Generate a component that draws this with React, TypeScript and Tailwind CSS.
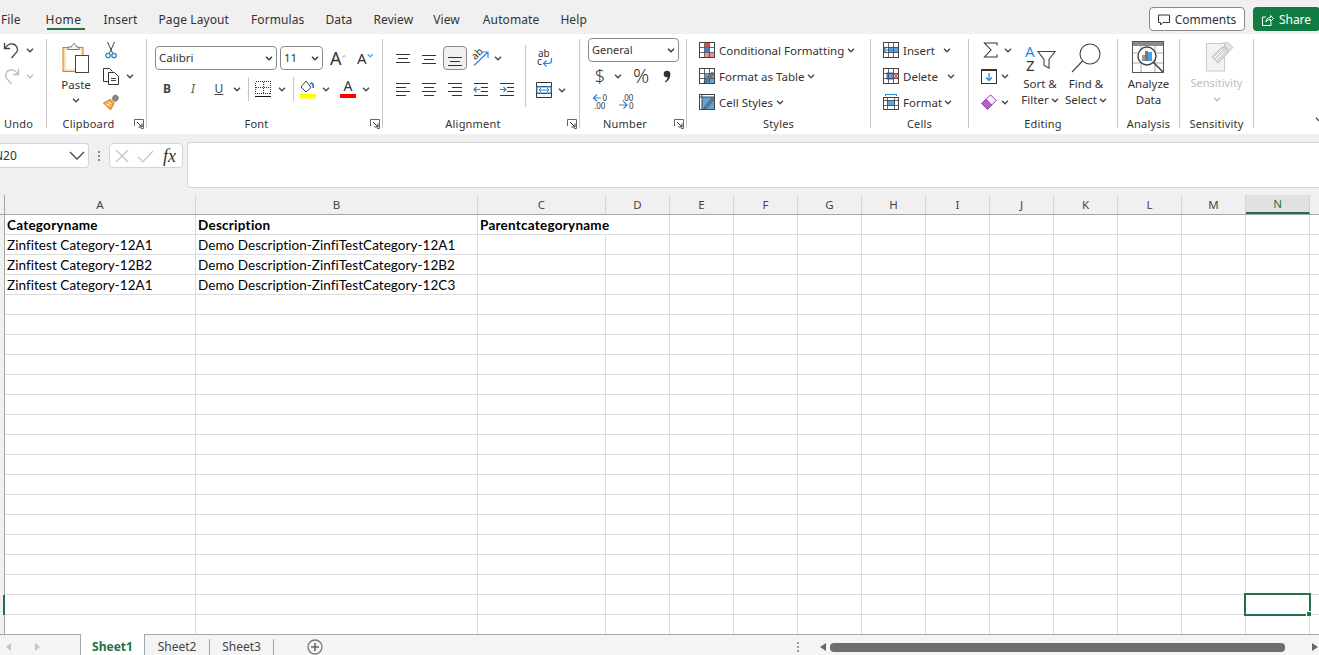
import React from 'react';

const UI = "font-['Noto_Sans',sans-serif]";

const Chev = ({ c = '#444', w = 8 }: { c?: string; w?: number }) => (
  <svg width={w} height="5" viewBox="0 0 8 5" className="shrink-0"><path d="M1 .8l3 3 3-3" fill="none" stroke={c} strokeWidth="1.300" /></svg>
);

const Launcher = () => (
  <svg width="10" height="10" viewBox="0 0 10 10"><path d="M.5 7V.5h9V9.500H7" fill="none" stroke="#666" /><path d="M3 3l5 5M8 4.500V8H4.500" fill="none" stroke="#333" /></svg>
);

const Group = ({ w, label, launcher, children, pr }: { w: string; label: string; launcher?: boolean; children: React.ReactNode; pr?: string }) => (
  <div className={`${w} shrink-0 h-[89px] border-r border-[#c8c8c8] flex flex-col`}>
    <div className="h-[79px] shrink-0 flex">{children}</div>
    <div className={`flex h-[12px] shrink-0 items-center ${pr ?? ''}`}>
      <div className="flex-1 text-center text-[11px] leading-[12px] text-[#333] tracking-[0.2px] whitespace-nowrap">{label}</div>
      {launcher && <div className="w-[16px] shrink-0 flex justify-start pl-[4px]"><Launcher /></div>}
    </div>
  </div>
);

const Slot = ({ w, children, h = 'h-[22px]', ml = '' }: { w: string; children?: React.ReactNode; h?: string; ml?: string }) => (
  <div className={`${w} ${h} ${ml} shrink-0 flex items-center justify-center`}>{children}</div>
);

const Lines = ({ rows }: { rows: [number, number, number][] }) => (
  <svg width="16" height="14" viewBox="0 0 16 14">
    {rows.map(([x1, x2, y], i) => <path key={i} d={`M${x1} ${y + 0.5}H${x2}`} stroke="#333" strokeWidth="1" />)}
  </svg>
);

const Undo = ({ c }: { c: string }) => (
  <svg width="17" height="18" viewBox="0 0 17 18"><path d="M1.500 2v5.500H7" fill="none" stroke={c} strokeWidth="1.300" /><path d="M1.800 7.300C4 4 7 2.200 10 3c4 1 5.400 5 3.800 8L8.500 17" fill="none" stroke={c} strokeWidth="1.300" /></svg>
);
const Redo = ({ c }: { c: string }) => (
  <svg width="17" height="18" viewBox="0 0 17 18"><path d="M15.500 2v5.500H10" fill="none" stroke={c} strokeWidth="1.300" /><path d="M15.200 7.300C13 4 10 2.200 7 3 3 4 1.600 8 3.200 11L8.500 17" fill="none" stroke={c} strokeWidth="1.300" /></svg>
);

const PasteIcon = () => (
  <svg width="28" height="31" viewBox="0 0 28 31">
    <rect x="1" y="4.500" width="20" height="24" fill="#fbe0b4" stroke="#d67f1d" />
    <rect x="4" y="7" width="15" height="19" fill="#fff" />
    <path d="M6 6.500V4h3.500C10 1.500 12 .5 12 .5s2 1 2.500 3.500H17v2.500z" fill="#f4f4f4" stroke="#777" />
    <rect x="13.500" y="12.500" width="13" height="17" fill="#fff" stroke="#444" />
  </svg>
);
const Scissors = () => (
  <svg width="12" height="17" viewBox="0 0 12 17">
    <path d="M2.500 0l5 11M9.500 0l-5 11" stroke="#444" fill="none" />
    <circle cx="3" cy="13.500" r="2.200" fill="none" stroke="#1e88d4" strokeWidth="1.300" />
    <circle cx="9" cy="13.500" r="2.200" fill="none" stroke="#1e88d4" strokeWidth="1.300" />
  </svg>
);
const CopyIcon = () => (
  <svg width="16" height="17" viewBox="0 0 16 17">
    <path d="M5 13.500H.5V.5h6l3 3" fill="#fff" stroke="#333" />
    <path d="M5.500 4.500h6l4 4v8h-10z" fill="#fff" stroke="#333" />
    <path d="M8 10.500h5M8 12.500h5" stroke="#444" />
  </svg>
);
const Painter = () => (
  <svg width="17" height="17" viewBox="0 0 17 17">
    <path d="M11 1.500l3-1 2.500 2.500-1 3-3 1.500L10 5z" fill="#888" stroke="#555" strokeWidth=".7" />
    <path d="M.5 9L8 5l4 4-4 7.500z" fill="#f4a63e" stroke="#d9751a" />
    <path d="M3 10l5 2M5 8l4 2" stroke="#fff" />
  </svg>
);

const SmallCaret = ({ up }: { up?: boolean }) => (
  <svg width="7" height="5" viewBox="0 0 7 5" className="mb-[10px]"><path d={up ? 'M.7 4l2.800-3 2.800 3' : 'M.7 1l2.800 3 2.800-3'} fill="none" stroke="#38a0e0" strokeWidth="1.200" /></svg>
);

const SelectBox = ({ w, text, cls = '' }: { w: string; text: string; cls?: string }) => (
  <div className={`${w} h-[24px] bg-white border border-[#8a8a8a] rounded-[4px] flex items-center justify-between pl-[3px] pr-[3px] text-[11.500px] text-[#333] ${cls}`}>
    <span>{text}</span><Chev c="#333" />
  </div>
);

const BordersIcon = () => (
  <svg width="16" height="17" viewBox="0 0 16 17" shapeRendering="crispEdges">
    <path d="M.5.500h15v12h-15zM.5 6.500h15M8 .500v12" fill="none" stroke="#333" strokeWidth="1" strokeDasharray="1 1" />
    <path d="M0 15.500h16" stroke="#111" strokeWidth="1.400" />
  </svg>
);
const FillIcon = () => (
  <svg width="16" height="19" viewBox="0 0 16 19">
    <path d="M6 1L1 7l5 5 5-4.500z" fill="#fff" stroke="#444" />
    <path d="M10 3c2-1.500 4 0 4 3v2h-1.600V5.500c0-1-1-1.500-2-1z" fill="#1e6fb8" />
    <rect x="0" y="14" width="16" height="4.500" fill="#ffff00" />
  </svg>
);

const Orientation = () => (
  <div className="relative w-[18px] h-[18px]">
    <svg width="18" height="18" viewBox="0 0 18 18" className="absolute inset-0"><path d="M2 16.500L16 3M10 3h6v6" fill="none" stroke="#2b88d8" strokeWidth="1.200" /></svg>
    <span className="absolute -left-[1px] -top-[1px] text-[10px] leading-[11px] text-[#333] -rotate-45 origin-center">ab</span>
  </div>
);
const WrapIcon = () => (
  <svg width="16" height="17" viewBox="0 0 16 17" className="overflow-visible">
    <text x="1" y="7" fontSize="10" fill="#333" fontFamily="Noto Sans">ab</text>
    <text x="0" y="15" fontSize="10" fill="#333" fontFamily="Noto Sans">c</text>
    <path d="M14.500 8v2.500c0 2-1 3-3 3H7M9.500 10.500l-3 3 3 3" fill="none" stroke="#2b88d8" strokeWidth="1.200" />
  </svg>
);
const MergeIcon = () => (
  <svg width="16" height="16" viewBox="0 0 16 16">
    <path d="M.5.500h15v15H.5zM.5 4.500h15M.5 11.500h15" fill="none" stroke="#333" />
    <rect x="1" y="5" width="14" height="6" fill="#fff" stroke="#2b88d8" />
    <path d="M3 8h10M5 6l-2 2 2 2M11 6l2 2-2 2" fill="none" stroke="#2b88d8" />
  </svg>
);
const CommaIcon = () => (
  <svg width="8" height="13" viewBox="0 0 8 13" className="shrink-0"><circle cx="4" cy="4" r="3.300" fill="#333" /><path d="M7.200 4c.3 4-1.700 7-5 8.500l-.4-1C4 10 5 8 4.500 6z" fill="#333" /></svg>
);
const IncDec = () => (
  <svg width="17" height="16" viewBox="0 0 17 16" className="overflow-visible">
    <path d="M9 5H1.500M5 1.500L1.500 5 5 8.500" fill="none" stroke="#2b88d8" strokeWidth="1.200" />
    <text x="10.500" y="7.500" fontSize="8" fill="#333" fontFamily="Noto Sans">0</text>
    <text x="2" y="15.500" fontSize="8" fill="#333" fontFamily="Noto Sans">.00</text>
  </svg>
);
const DecDec = () => (
  <svg width="17" height="16" viewBox="0 0 17 16" className="overflow-visible">
    <text x="4" y="7.500" fontSize="8" fill="#333" fontFamily="Noto Sans">.00</text>
    <path d="M1 12h8M5.500 8.500L9 12l-3.500 3.500" fill="none" stroke="#2b88d8" strokeWidth="1.200" />
    <text x="11" y="15.500" fontSize="8" fill="#333" fontFamily="Noto Sans">0</text>
  </svg>
);

const Grid = ({ children }: { children?: React.ReactNode }) => (
  <svg width="16" height="16" viewBox="0 0 16 16" className="shrink-0">
    <rect x=".5" y=".5" width="15" height="15" fill="#fff" stroke="#444" />
    {children}
    <path d="M.5 5.500h15M.5 10.500h15M5.500.500v15M10.500.500v15" fill="none" stroke="#444" strokeWidth=".8" />
    <rect x=".5" y=".5" width="15" height="15" fill="none" stroke="#444" />
  </svg>
);
const CondIcon = () => <Grid><rect x="6" y="1" width="4" height="4" fill="#e8414a" /><rect x="6" y="6" width="4" height="4" fill="#2b88d8" /><rect x="6" y="11" width="9" height="4" fill="#f48d92" /></Grid>;
const Brush = () => <path d="M5 15l1-3 7-8 2 1.500-6.500 8z" fill="#777" stroke="#444" strokeWidth=".6" />;
const TableIcon = () => <svg width="16" height="16" viewBox="0 0 16 16" className="shrink-0"><rect x=".5" y=".5" width="15" height="15" fill="#fff" stroke="#444" /><rect x="6" y="6" width="9" height="9" fill="#5aa5e3" /><path d="M.5 5.500h15M.5 10.500h15M5.500.500v15M10.500.500v15" fill="none" stroke="#444" strokeWidth=".8" /><Brush /></svg>;
const CellStyleIcon = () => (
  <svg width="16" height="16" viewBox="0 0 16 16" className="shrink-0"><rect x=".5" y=".5" width="15" height="15" fill="#fff" stroke="#444" /><rect x="3" y="3" width="12" height="12" fill="#5aa5e3" /><path d="M.5 3h15M3 .5V15.500" stroke="#444" /><Brush /></svg>
);
const InsertIcon = () => <Grid><rect x="6" y="5" width="9" height="6" fill="#5aa5e3" /><path d="M.5 8H9M3.500 5L.5 8l3 3" fill="none" stroke="#1e88d4" strokeWidth="1.200" /></Grid>;
const DeleteIcon = () => <Grid><rect x="4" y="5" width="6" height="6" fill="#5aa5e3" stroke="#1e6fb8" /><path d="M11 5.500l4 5M15 5.500l-4 5" stroke="#e8414a" strokeWidth="1.300" /></Grid>;
const FormatIcon = () => (
  <svg width="16" height="16" viewBox="0 0 16 16" className="shrink-0">
    <path d="M2.500.500h11M2.500 0v2M13.500 0v2" stroke="#1e88d4" fill="none" />
    <rect x=".5" y="3.500" width="15" height="12" fill="#fff" stroke="#444" />
    <rect x="4" y="6" width="8" height="6" fill="#5aa5e3" />
    <path d="M.5 6.500h15M.5 11.500h15M4.500 3.500v12M11.500 3.500v12" stroke="#444" strokeWidth=".8" />
  </svg>
);
const SumIcon = () => (
  <svg width="15" height="16" viewBox="0 0 15 16"><path d="M14 3.500V1H1.500l6.500 7-6.500 7H14v-2.500" fill="none" stroke="#333" strokeWidth="1.100" /></svg>
);
const FillDown = () => (
  <svg width="16" height="15" viewBox="0 0 16 15"><rect x=".5" y=".5" width="15" height="14" fill="#fff" stroke="#333" /><path d="M.5 1.500h15" stroke="#333" /><path d="M8 4v7M5 8.500L8 11.500l3-3" fill="none" stroke="#2b88d8" strokeWidth="1.300" /></svg>
);
const Eraser = () => (
  <svg width="16" height="16" viewBox="0 0 16 16"><path d="M.8 9.500L9.500.8l5.700 5.700-8.700 8.700z" fill="#f6eef9" stroke="#8d3fa8" /><path d="M.8 9.500L5 5.300l5.700 5.700-4.200 4.200z" fill="#b264c9" stroke="#8d3fa8" /></svg>
);
const SortIcon = () => (
  <svg width="31" height="27" viewBox="0 0 31 27" className="overflow-visible">
    <text x="0" y="13" fontSize="15" fill="#2b88d8" fontFamily="Noto Sans">A</text>
    <text x="1" y="27" fontSize="15" fill="#333" fontFamily="Noto Sans">Z</text>
    <path d="M13 7.500h17l-6 8V24l-5-2.500v-6z" fill="#fff" stroke="#444" strokeWidth="1.100" />
  </svg>
);
const FindIcon = () => (
  <svg width="30" height="30" viewBox="0 0 30 30"><circle cx="19" cy="11" r="10" fill="#fff" stroke="#444" strokeWidth="1.100" /><path d="M11.500 18L1 29" stroke="#444" strokeWidth="1.100" /></svg>
);
const AnalyzeIcon = () => (
  <svg width="33" height="33" viewBox="0 0 33 33">
    <rect x=".5" y=".5" width="31" height="31" fill="#fff" stroke="#555" />
    <rect x="1" y="1" width="30" height="4" fill="#8a8a8a" />
    <path d="M1 12h30M1 22h30M9 5v26M23 5v26" stroke="#aaa" />
    <circle cx="15" cy="15" r="9" fill="#fff" stroke="#444" strokeWidth="1.400" />
    <rect x="10" y="14" width="3" height="6" fill="#999" /><rect x="13" y="10" width="3" height="10" fill="#777" /><rect x="16" y="11" width="4" height="9" fill="#4a9fe0" />
    <path d="M21 21l10 10" stroke="#444" strokeWidth="1.600" />
  </svg>
);
const SensIcon = () => (
  <svg width="28" height="30" viewBox="0 0 28 30">
    <path d="M.5 1.500h16v-1l2 1 .1 3.500 3 5-3 3v16H.5z" fill="#f2f2f2" stroke="#c9c9c9" />
    <path d="M6 15l10-10 7 2-1 4-10 10z" fill="#d8d8d8" stroke="#bdbdbd" />
    <path d="M18 1l4-.5 5 5-4 4z" fill="#e4e4e4" stroke="#c5c5c5" />
    <path d="M8 16l8-8M10 18l8-8" stroke="#fff" />
  </svg>
);

const tabs: [string, string][] = [
  ['Home', 'ml-[26px] w-[38px] -indent-[1px] tracking-[0.4px]'], ['Insert', 'ml-[19px]'], ['Page Layout', 'ml-[21px]'], ['Formulas', 'ml-[22px]'],
  ['Data', 'ml-[21px]'], ['Review', 'ml-[21px]'], ['View', 'ml-[20px]'], ['Automate', 'ml-[23px]'], ['Help', 'ml-[21px]'],
];

const cols = 'grid grid-cols-[5px_191px_282px_128px_repeat(11,64px)_1fr]';
const letters = ['A', 'B', 'C', 'D', 'E', 'F', 'G', 'H', 'I', 'J', 'K', 'L', 'M', 'N'];
const data: string[][] = [
  ['Categoryname', 'Description', 'Parentcategoryname'],
  ['Zinfitest Category-12A1', 'Demo Description-ZinfiTestCategory-12A1', ''],
  ['Zinfitest Category-12B2', 'Demo Description-ZinfiTestCategory-12B2', ''],
  ['Zinfitest Category-12A1', 'Demo Description-ZinfiTestCategory-12C3', ''],
];
const rows = Array.from({ length: 21 }, (_, i) => i);

export default function App() {
  return (
    <div className={`w-[1319px] h-[655px] overflow-hidden bg-[#f0f0f0] flex flex-col ${UI} text-[#333]`}>
      {/* Tabs */}
      <div className="h-[34px] shrink-0 flex items-start">
        <div className="flex items-start pt-[11px] pl-[1px] text-[12px] leading-[18px] tracking-[0.1px] text-[#333]">
          <span>File</span>
          {tabs.map(([t, m]) => (
            <span key={t} className={`${m} relative whitespace-nowrap`}>
              {t}
              {t === 'Home' && <span className="absolute left-0 right-0 top-[17px] h-[2px] bg-[#217346]" />}
            </span>
          ))}
        </div>
        <div className="ml-auto flex pt-[7px] gap-[8px] -mr-[1px]">
          <div className="w-[96px] h-[24px] bg-white border border-[#8a8a8a] rounded-[4px] flex items-center justify-center gap-[5px] text-[12px] leading-[24px] pt-[2px]">
            <svg width="12" height="12" viewBox="0 0 12 12"><path d="M.5 1h11v7.500H5L2.500 11V8.500H.5z" fill="none" stroke="#333" /></svg>
            Comments
          </div>
          <div className="w-[67px] h-[24px] bg-[#107c41] rounded-[4px] flex items-center justify-center gap-[5px] text-[12px] leading-[24px] pt-[2px] text-white">
            <svg width="12" height="12" viewBox="0 0 12 12"><path d="M4 3H.5v8.500h8.500V8M4 8c0-3 2-4.500 4.500-4.500V1.500l3 3-3 3V5.500C6.500 5.500 5 6 4 8z" fill="none" stroke="#fff" /></svg>
            Share
          </div>
        </div>
      </div>

      {/* Ribbon */}
      <div className="h-[100px] shrink-0 bg-white pt-[5px] flex text-[11.500px] leading-[14px]">
        <Group w="w-[47px]" label="Undo" pr="pr-[11px] pl-[2px]">
          <div className="flex flex-col gap-[4px] pl-[3px]">
            <div className="h-[22px] flex items-center gap-[6px]"><Undo c="#444" /><Chev /></div>
            <div className="h-[22px] flex items-center gap-[6px]"><Redo c="#bbb" /><Chev c="#bbb" /></div>
          </div>
        </Group>

        <Group w="w-[100px]" label="Clipboard" launcher>
          <div className="w-[47px] pl-[11px] flex flex-col items-center pt-[4px]">
            <PasteIcon />
            <span className="mt-[4px] text-[11.500px] leading-[14px]">Paste</span>
            <div className="mt-[6px]"><Chev /></div>
          </div>
          <div className="flex flex-col gap-[4px] pl-[9px]">
            <Slot w="w-[16px]"><Scissors /></Slot>
            <div className="h-[22px] flex items-center gap-[7px]"><CopyIcon /><Chev /></div>
            <Slot w="w-[16px]"><Painter /></Slot>
          </div>
        </Group>

        <Group w="w-[236px]" label="Font" launcher>
          <div className="flex flex-col pl-[8px] pt-[7px]">
            <div className="flex items-center h-[24px]">
              <SelectBox w="w-[122px]" text="Calibri" />
              <SelectBox w="w-[43px]" text="11" cls="ml-[3px]" />
              <div className="ml-[7px] w-[16px] flex items-end"><span className="text-[18px] leading-[22px] text-[#333]">A</span><SmallCaret up /></div>
              <div className="ml-[11px] w-[16px] flex items-end"><span className="text-[15px] leading-[20px] text-[#333]">A</span><SmallCaret /></div>
            </div>
            <div className="flex items-center mt-[7px] h-[24px]">
              <Slot w="w-[24px]" h="h-[24px]"><span className="font-bold text-[12px] text-[#444]">B</span></Slot>
              <Slot w="w-[24px]" h="h-[24px]" ml="ml-[2px]"><span className="italic text-[12px] text-[#555]">I</span></Slot>
              <Slot w="w-[24px]" h="h-[24px]" ml="ml-[2px]"><span className="underline text-[12px] text-[#444]">U</span></Slot>
              <Slot w="w-[8px]" h="h-[24px]" ml="ml-[2px]"><Chev /></Slot>
              <div className="w-px h-[24px] bg-[#c8c8c8] ml-[7px]" />
              <Slot w="w-[16px]" h="h-[24px]" ml="ml-[6px]"><BordersIcon /></Slot>
              <Slot w="w-[8px]" h="h-[24px]" ml="ml-[7px]"><Chev /></Slot>
              <div className="w-px h-[24px] bg-[#c8c8c8] ml-[7px]" />
              <Slot w="w-[16px]" h="h-[24px]" ml="ml-[6px]"><FillIcon /></Slot>
              <Slot w="w-[8px]" h="h-[24px]" ml="ml-[6px]"><Chev /></Slot>
              <div className="ml-[10px] w-[16px] h-[24px] flex flex-col items-center pt-[1px]">
                <span className="text-[14px] leading-[16px] text-[#333]">A</span>
                <span className="w-[16px] h-[4px] bg-[#ff0000]" />
              </div>
              <Slot w="w-[8px]" h="h-[24px]" ml="ml-[6px]"><Chev /></Slot>
            </div>
          </div>
        </Group>

        <Group w="w-[197px]" label="Alignment" launcher>
          <div className="flex flex-col pl-[7px] pt-[7px]">
            <div className="flex h-[24px] items-center">
              <Slot w="w-[26px]" h="h-[24px]"><Lines rows={[[1, 15, 3], [3, 13, 7], [1, 15, 11]]} /></Slot>
              <Slot w="w-[26px]" h="h-[24px]"><Lines rows={[[1, 15, 4], [3, 13, 8], [1, 15, 12]]} /></Slot>
              <div className="w-[26px] h-[24px] flex justify-center"><div className="w-[24px] h-[24px] bg-[#f0f0f0] border border-[#8a8a8a] rounded-[4px] flex items-center justify-center pt-[3px]"><Lines rows={[[1, 15, 4], [3, 13, 8], [1, 15, 12]]} /></div></div>
              <Slot w="w-[26px]" h="h-[24px]"><Orientation /></Slot>
              <Slot w="w-[8px]" h="h-[24px]"><Chev /></Slot>
            </div>
            <div className="flex h-[24px] items-center mt-[7px]">
              <Slot w="w-[26px]" h="h-[24px]"><Lines rows={[[1, 15, 1], [1, 11, 5], [1, 15, 9], [1, 11, 13]]} /></Slot>
              <Slot w="w-[26px]" h="h-[24px]"><Lines rows={[[1, 15, 1], [3, 13, 5], [1, 15, 9], [3, 13, 13]]} /></Slot>
              <Slot w="w-[26px]" h="h-[24px]"><Lines rows={[[1, 15, 1], [5, 15, 5], [1, 15, 9], [5, 15, 13]]} /></Slot>
              <Slot w="w-[26px]" h="h-[24px]">
                <svg width="16" height="14" viewBox="0 0 16 14"><path d="M1 1.500h14M8 5.500h7M8 9.500h7M1 13.500h14" stroke="#333" /><path d="M7 7.500H1M3.500 5L1 7.500 3.500 10" fill="none" stroke="#2b88d8" strokeWidth="1.200" /></svg>
              </Slot>
              <Slot w="w-[26px]" h="h-[24px]">
                <svg width="16" height="14" viewBox="0 0 16 14"><path d="M1 1.500h14M8 5.500h7M8 9.500h7M1 13.500h14" stroke="#333" /><path d="M1 7.500h6M4.500 5L7 7.500 4.500 10" fill="none" stroke="#2b88d8" strokeWidth="1.200" /></svg>
              </Slot>
            </div>
          </div>
          <div className="w-px h-[62px] bg-[#c8c8c8] mt-[6px] ml-[5px]" />
          <div className="flex flex-col pl-[10px] pt-[11px]">
            <div className="w-[16px] h-[18px] ml-[1px]"><WrapIcon /></div>
            <div className="flex items-center gap-[6px] mt-[14px]"><MergeIcon /><Chev /></div>
          </div>
        </Group>

        <Group w="w-[107px]" label="Number" launcher>
          <div className="flex flex-col pl-[8px] -mt-px">
            <SelectBox w="w-[91px]" text="General" cls="text-[11px]" />
            <div className="flex items-center h-[26px] mt-[1px] text-[#333]">
              <Slot w="w-[24px]" h="h-[26px]"><span className="text-[18px] font-light">$</span></Slot>
              <Slot w="w-[8px]" h="h-[26px]" ml="ml-[2px]"><Chev /></Slot>
              <Slot w="w-[30px]" h="h-[26px]" ml="ml-[4px]"><span className="text-[20px] font-light">%</span></Slot>
              <Slot w="w-[8px]" h="h-[26px]" ml="ml-[7px]"><CommaIcon /></Slot>
            </div>
            <div className="flex items-center mt-[4px] pl-[4px] gap-[9px]"><IncDec /><DecDec /></div>
          </div>
        </Group>

        <Group w="w-[184px]" label="Styles">
          <div className="flex flex-col gap-[4px] pl-[12px] text-[11.500px]">
            <div className="h-[22px] flex items-center whitespace-nowrap"><CondIcon /><span className="ml-[4px] mr-[3px] mt-[2px]">Conditional Formatting</span><Chev /></div>
            <div className="h-[22px] flex items-center whitespace-nowrap"><TableIcon /><span className="ml-[4px] mr-[3px] mt-[2px]">Format as Table</span><Chev /></div>
            <div className="h-[22px] flex items-center whitespace-nowrap"><CellStyleIcon /><span className="ml-[4px] mr-[3px] mt-[2px]">Cell Styles</span><Chev /></div>
          </div>
        </Group>

        <Group w="w-[98px]" label="Cells">
          <div className="flex flex-col gap-[4px] pl-[12px] text-[11.500px]">
            <div className="h-[22px] flex items-center"><InsertIcon /><span className="ml-[4px] w-[40px] mt-[2px]">Insert</span><Chev /></div>
            <div className="h-[22px] flex items-center"><DeleteIcon /><span className="ml-[4px] w-[44px] mt-[2px]">Delete</span><Chev /></div>
            <div className="h-[22px] flex items-center"><FormatIcon /><span className="ml-[4px] w-[41px] mt-[2px]">Format</span><Chev /></div>
          </div>
        </Group>

        <Group w="w-[149px]" label="Editing">
          <div className="flex flex-col gap-[4px] pl-[12px] w-[48px]">
            <div className="h-[22px] flex items-center gap-[6px] pl-[2px]"><SumIcon /><Chev /></div>
            <div className="h-[22px] flex items-center gap-[4px]"><FillDown /><Chev /></div>
            <div className="h-[22px] flex items-center gap-[4px]"><Eraser /><Chev /></div>
          </div>
          <div className="w-[46px] flex flex-col items-center pt-[5px]">
            <SortIcon />
            <span className="mt-[6px] whitespace-nowrap">Sort &amp;</span>
            <span className="mt-[2px] flex items-center gap-[2px] whitespace-nowrap">Filter<Chev /></span>
          </div>
          <div className="w-[46px] flex flex-col items-center pt-[4px]">
            <FindIcon />
            <span className="mt-[4px] whitespace-nowrap">Find &amp;</span>
            <span className="mt-[2px] flex items-center gap-[2px] whitespace-nowrap">Select<Chev /></span>
          </div>
        </Group>

        <Group w="w-[62px]" label="Analysis">
          <div className="w-full flex flex-col items-center pt-[2px]">
            <AnalyzeIcon />
            <span className="mt-[3px]">Analyze</span>
            <span className="mt-[2px]">Data</span>
          </div>
        </Group>

        <Group w="w-[74px]" label="Sensitivity">
          <div className="w-full flex flex-col items-center pt-[3px] text-[#bdbdbd]">
            <div className="pl-[7px]"><SensIcon /></div>
            <span className="mt-[4px] text-[11px] whitespace-nowrap">Sensitivity</span>
            <div className="mt-[7px]"><Chev c="#bbb" /></div>
          </div>
        </Group>

        <div className="flex-1 flex justify-end items-start pt-[78px] -mr-[4px]"><Chev c="#444" /></div>
      </div>

      {/* Formula bar */}
      <div className="h-[61px] shrink-0 flex items-start pt-[8px] bg-[#f0f0f0]">
        <div className="w-[89px] h-[25px] mt-[1px] bg-white border border-[#d4d4d4] rounded-r-[4px] border-l-0 flex items-center justify-between pr-[3px] overflow-hidden">
          <span className="text-[12px] -ml-[6px] text-[#333]">N20</span>
          <svg width="16" height="9" viewBox="0 0 16 9"><path d="M1 1l7 7 7-7" fill="none" stroke="#444" strokeWidth="1.300" /></svg>
        </div>
        <div className="w-[20px] h-[25px] mt-[1px] flex flex-col items-center justify-center gap-[2px]">
          <span className="w-[2px] h-[2px] bg-[#888]" /><span className="w-[2px] h-[2px] bg-[#888]" /><span className="w-[2px] h-[2px] bg-[#888]" />
        </div>
        <div className="w-[74px] h-[25px] mt-[1px] bg-white border border-[#d4d4d4] rounded-[4px] flex items-center pl-[4px] gap-[7px]">
          <svg width="16" height="16" viewBox="0 0 16 16"><path d="M2 2l12 12M14 2L2 14" stroke="#c4c4c4" strokeWidth="1.200" /></svg>
          <svg width="17" height="14" viewBox="0 0 17 14"><path d="M1 8l5 5L16 2" fill="none" stroke="#c4c4c4" strokeWidth="1.200" /></svg>
          <span className="ml-[2px] font-['Liberation_Serif',serif] italic text-[18px] leading-[18px] text-[#333]">fx</span>
        </div>
        <div className="ml-[4px] flex-1 h-[46px] bg-white border border-[#d4d4d4] rounded-l-[4px] border-r-0" />
      </div>

      {/* Sheet */}
      <div className="flex-1 min-h-0 bg-white">
        <div className={`${cols} h-[20px] bg-[#f0f0f0] border-b border-[#a6a6a6] text-[11.500px] text-[#444]`}>
          <div className="border-r border-[#a6a6a6]" />
          {letters.map((l) => (
            <div key={l} className={`flex items-center justify-center border-r border-[#d4d4d4] ${l === 'N' ? 'bg-[#e1e1e1] text-[#217346] border-b-2 border-b-[#217346]' : ''}`}>{l}</div>
          ))}
          <div />
        </div>
        {rows.map((r) => {
          const last = r === 20;
          return (
            <div key={r} className={`${cols} ${last ? 'h-[19px]' : 'h-[20px]'}`}>
              <div className={`bg-[#f0f0f0] border-r border-[#a6a6a6] ${r === 19 ? 'border-r-2 border-r-[#217346]' : ''}`} />
              {letters.map((l, ci) => {
                const text = data[r]?.[ci];
                return (
                  <div
                    key={l}
                    className={`relative flex items-center pl-[2px] whitespace-nowrap font-['Lato',sans-serif] text-[13.500px] leading-[16px] text-black border-r ${last ? '' : 'border-b'} border-[#dcdcdc] ${r === 0 ? 'font-bold tracking-[0.25px]' : 'tracking-[0.05px]'} ${r === 0 && ci === 2 ? 'border-r-transparent' : ''}`}
                  >
                    {text}
                    {r === 19 && l === 'N' && (
                      <div className="absolute -left-[2px] -top-[2px] w-[67px] h-[23px] border-2 border-[#217346] z-10">
                        <span className="absolute -right-[3px] -bottom-[3px] w-[6px] h-[6px] bg-[#217346] border border-white" />
                      </div>
                    )}
                  </div>
                );
              })}
              <div className={last ? '' : 'border-b border-[#dcdcdc]'} />
            </div>
          );
        })}

        {/* Sheet tabs */}
        <div className="relative z-20 h-[21px] bg-[#f4f4f4] flex items-start text-[12px] text-[#444]">
          <div className="w-[80px] shrink-0 h-full border-t border-[#a6a6a6] flex items-center pl-[6px] pt-[4px] gap-[24px]">
            <svg width="5" height="8" viewBox="0 0 5 8"><path d="M5 0v8L0 4z" fill="#c4c4c4" /></svg>
            <svg width="5" height="8" viewBox="0 0 5 8"><path d="M0 0v8l5-4z" fill="#c4c4c4" /></svg>
          </div>
          <div className="w-[65px] shrink-0 h-full bg-white border-x border-[#a6a6a6] flex items-center justify-center pt-[5px] font-bold text-[#217346]">Sheet1</div>
          <div className="h-full flex-1 min-w-0 border-t border-[#a6a6a6] flex items-center pt-[4px]">
            <div className="w-[65px] shrink-0 flex justify-center border-r border-[#a6a6a6] h-[16px] items-center">Sheet2</div>
            <div className="w-[64px] shrink-0 flex justify-center border-r border-[#a6a6a6] h-[16px] items-center">Sheet3</div>
            <div className="ml-[33px] shrink-0">
              <svg width="16" height="16" viewBox="0 0 16 16"><circle cx="8" cy="8" r="7" fill="none" stroke="#777" strokeWidth="1.300" /><path d="M8 4v8M4 8h8" stroke="#666" strokeWidth="1.600" /></svg>
            </div>
            <div className="ml-[474px] shrink-0 flex flex-col gap-[2px]">
              <span className="w-[2px] h-[2px] bg-[#999]" /><span className="w-[2px] h-[2px] bg-[#999]" /><span className="w-[2px] h-[2px] bg-[#999]" />
            </div>
            <div className="ml-[21px] shrink-0"><svg width="6" height="8" viewBox="0 0 6 8"><path d="M6 0v8L0 4z" fill="#666" /></svg></div>
            <div className="ml-[4px] shrink-0 w-[455px] h-[9px] rounded-[4px] bg-[#6e6e6e]" />
            <div className="ml-[27px] shrink-0"><svg width="6" height="8" viewBox="0 0 6 8"><path d="M0 0v8l6-4z" fill="#666" /></svg></div>
          </div>
        </div>
      </div>
    </div>
  );
}
